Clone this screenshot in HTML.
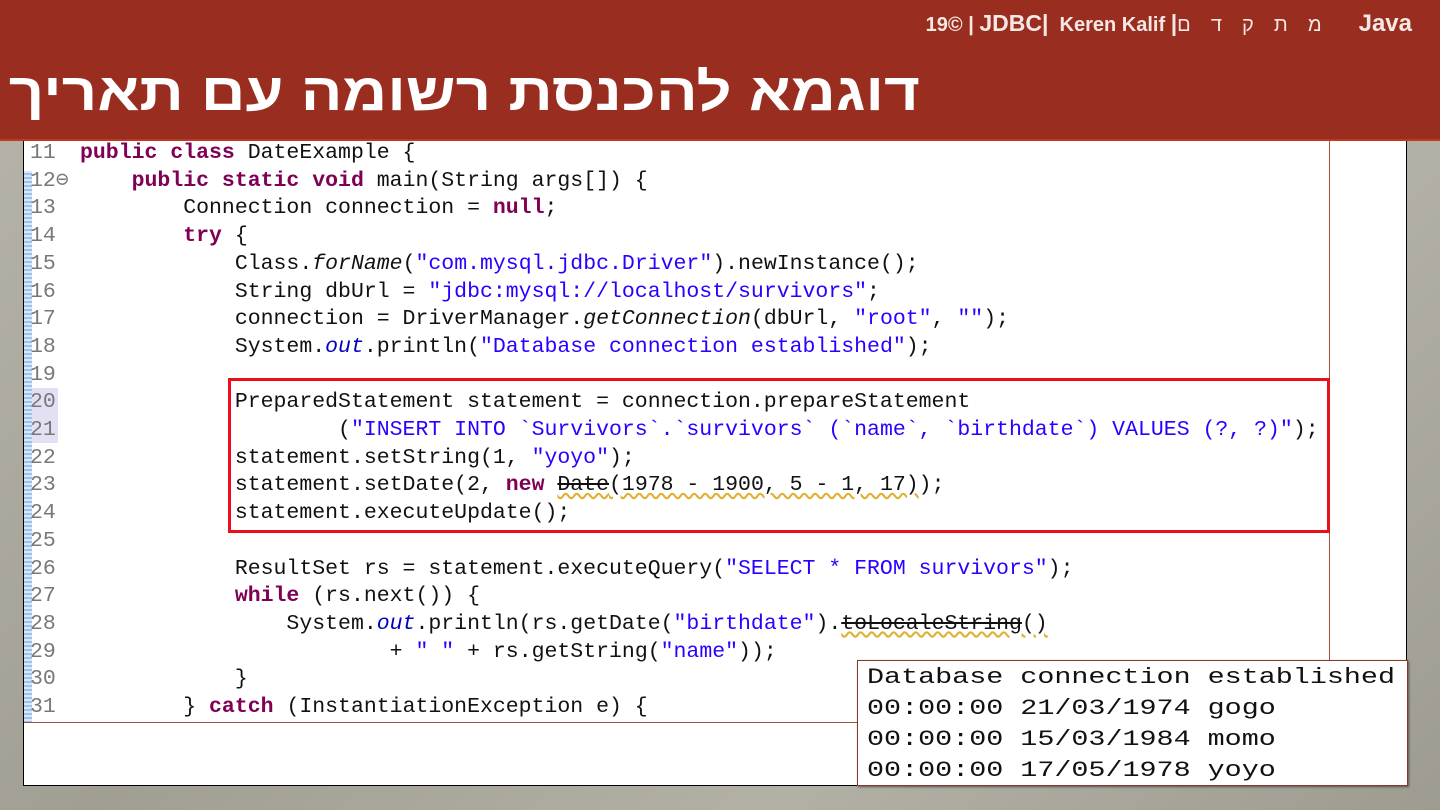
<!DOCTYPE html>
<html><head><meta charset="utf-8"><style>
body{margin:0;width:1440px;height:810px;overflow:hidden;background:#aaa79c;position:relative;font-family:"Liberation Sans",sans-serif}
.bg{position:absolute;inset:0;background:linear-gradient(135deg,#b8b5aa,#a19e93 40%,#b3b0a5 70%,#9e9b90)}
.hdr{position:absolute;left:0;top:0;width:1440px;height:139px;background:#992d1f;border-bottom:2px solid #c0391f}
.top{position:absolute;right:28px;top:10px;color:#f4e8e4;font-weight:bold;font-size:20px;white-space:nowrap;direction:ltr;unicode-bidi:bidi-override}
.top .j{font-size:24px;margin-left:34px}
.top .b{font-size:23px}
.top .h{font-weight:normal;font-size:20px;letter-spacing:3px}
.ttl{position:absolute;left:10px;top:62px;width:910px;text-align:right;color:#fff;font-weight:bold;font-size:53px;direction:rtl;white-space:nowrap;transform:scaleX(1.165);transform-origin:right center;font-family:"Liberation Sans","DejaVu Sans",sans-serif}
.box{position:absolute;left:23px;top:141px;width:1382px;height:644px;background:#fff;border:1px solid #000;border-top:none}
.code{position:absolute;left:24px;top:141px;width:1305px;height:581px;border-right:1px solid #a0523a;border-bottom:1px solid #a0523a;overflow:hidden;background:#fff}
.stripe{position:absolute;left:0;top:30px;width:8px;height:560px;background:repeating-linear-gradient(0deg,#9cc3ee 0 2px,#d8e8fa 2px 4px)}
pre{position:absolute;margin:0;top:-1px;font-family:"Liberation Mono","DejaVu Sans Mono",monospace;font-size:21.5px;line-height:27.7px;color:#111}
.ln{left:6px;color:#787878;width:34px}
.src{left:56px}
.k{color:#7f0055;font-weight:bold}.s{color:#2a00ff}.f{color:#0000c0;font-style:italic}.i{font-style:italic}
.hl{position:absolute;left:0;width:34px;height:55px;top:247px;background:#e4e0f4}
.red{position:absolute;left:228px;top:378px;width:1096px;height:149px;border:3px solid #e8101a}
.out{position:absolute;left:857px;top:660px;width:549px;height:124px;background:#fff;border:1px solid #8a3a2a;box-shadow:1px 1px 2px #555;overflow:hidden}
.out pre{position:static;padding:1px 0 0 7px;font-family:"Liberation Mono",monospace;font-size:22px;line-height:31px;color:#111;transform:scaleX(1.29);transform-origin:left top}
.wav{text-decoration:underline wavy #e0b030}
.del{text-decoration:line-through}
</style></head><body>
<div class="bg"></div>
<div class="hdr">
<div class="top">19© | <span class="b">JDBC|</span> &nbsp;Keren Kalif <span class="b">|</span><span class="h">ם &nbsp;ד &nbsp;ק &nbsp;ת &nbsp;מ</span><span class="j">Java</span></div>
<div class="ttl">דוגמא להכנסת רשומה עם תאריך</div>
</div>
<div class="box"></div>
<div class="code">
<div class="hl"></div>
<div class="stripe"></div>
<pre class="ln">11
12⊖
13
14
15
16
17
18
19
20
21
22
23
24
25
26
27
28
29
30
31</pre>
<pre class="src"><span class="k">public class</span> DateExample {
    <span class="k">public static void</span> main(String args[]) {
        Connection connection = <span class="k">null</span>;
        <span class="k">try</span> {
            Class.<span class="i">forName</span>(<span class="s">"com.mysql.jdbc.Driver"</span>).newInstance();
            String dbUrl = <span class="s">"jdbc:mysql://localhost/survivors"</span>;
            connection = DriverManager.<span class="i">getConnection</span>(dbUrl, <span class="s">"root"</span>, <span class="s">""</span>);
            System.<span class="f">out</span>.println(<span class="s">"Database connection established"</span>);

            PreparedStatement statement = connection.prepareStatement
                    (<span class="s">"INSERT INTO `Survivors`.`survivors` (`name`, `birthdate`) VALUES (?, ?)"</span>);
            statement.setString(1, <span class="s">"yoyo"</span>);
            statement.setDate(2, <span class="k">new</span> <span class="wav"><span class="del">Date</span>(1978 - 1900, 5 - 1, 17)</span>);
            statement.executeUpdate();

            ResultSet rs = statement.executeQuery(<span class="s">"SELECT * FROM survivors"</span>);
            <span class="k">while</span> (rs.next()) {
                System.<span class="f">out</span>.println(rs.getDate(<span class="s">"birthdate"</span>).<span class="wav"><span class="del">toLocaleString</span>()</span>
                        + <span class="s">" "</span> + rs.getString(<span class="s">"name"</span>));
            }
        } <span class="k">catch</span> (InstantiationException e) {</pre>
</div>
<div class="red"></div>
<div class="out"><pre>Database connection established
00:00:00 21/03/1974 gogo
00:00:00 15/03/1984 momo
00:00:00 17/05/1978 yoyo</pre></div>
</body></html>
